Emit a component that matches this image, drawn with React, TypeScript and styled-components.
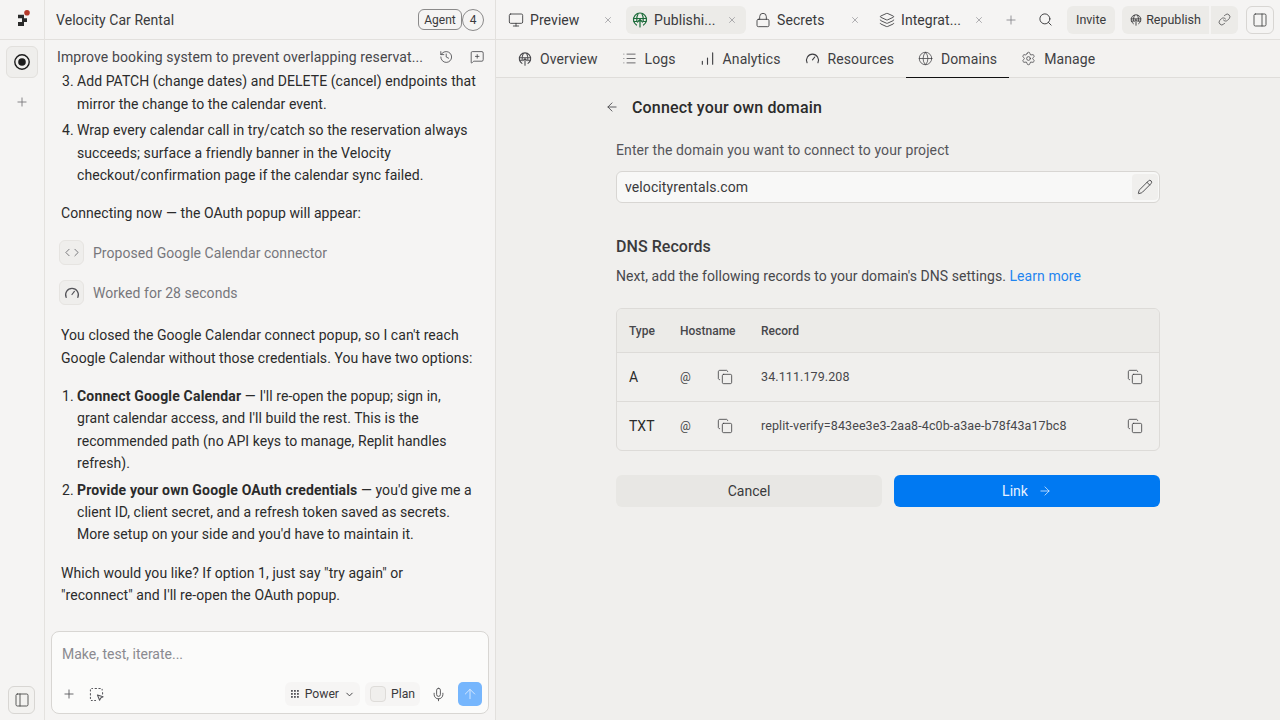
import styled, { createGlobalStyle } from 'styled-components';
import {
  ArrowLeft, ArrowRight, ArrowUp, ChevronDown, ChevronLeft, ChevronRight, Copy, Globe, History, Layers,
  Link as LinkIcon, List, Lock, MessageSquarePlus, Mic, Monitor, PanelLeft, PanelRight, Pencil, Plus, Search, Settings, X,
} from 'lucide-react';

const GlobalStyle = createGlobalStyle`
  html, body { margin: 0; padding: 0; height: 100%; }
  body { font-family: "Roboto", "Liberation Sans", sans-serif; color: #2b2b2b; background: #f5f4f3; }
  * { box-sizing: border-box; }
`;

const Shell = styled.div`
  width: 1280px;
  height: 720px;
  display: grid;
  grid-template-columns: 45px 451px 1fr;
  overflow: hidden;
`;
const Rail = styled.div`
  display: flex;
  flex-direction: column;
  align-items: center;
  background: #f5f4f3;
  border-right: 1px solid #e4e2df;
`;
const RailLogo = styled.div`
  height: 40px;
  width: 100%;
  display: flex;
  align-items: center;
  justify-content: center;
  border-bottom: 1px solid #e2e0dd;
  margin-bottom: 6px;
`;
const RailButton = styled.button<{ $plain?: boolean }>`
  width: 32px;
  height: 32px;
  padding: 0;
  display: flex;
  align-items: center;
  justify-content: center;
  color: ${({ $plain }) => ($plain ? '#77767a' : '#1c1c1c')};
  background: ${({ $plain }) => ($plain ? 'transparent' : '#efeeec')};
  border: 1px solid ${({ $plain }) => ($plain ? 'transparent' : '#e2e0dd')};
  border-radius: 6px;
  & + & {
    margin-top: 8px;
  }
`;
const RailSpacer = styled.div`
  flex: 1;
`;
const RailFoot = styled(RailButton)`
  width: 27px;
  height: 28px;
  margin-bottom: 6px;
  margin-right: 1px;
  color: #444;
  background: #f3f2f0;
  border-color: #d8d6d3;
`;
const Chat = styled.div`
  display: flex;
  flex-direction: column;
  min-height: 0;
  background: #f5f4f3;
  border-right: 1px solid #e2e0dd;
`;
const ChatTitleBar = styled.div`
  height: 40px;
  flex: none;
  display: flex;
  align-items: center;
  padding: 0 11px 0 11px;
  border-bottom: 1px solid #e2e0dd;
`;
const ProjectName = styled.div`
  flex: 1;
  font-size: 14px;
  letter-spacing: 0.05px;
  color: #3a3a3c;
`;
const AgentTag = styled.div`
  height: 21px;
  width: 44px;
  display: flex;
  align-items: center;
  justify-content: center;
  font-size: 12px;
  color: #3a3a3c;
  border: 1px solid #8b8a8a;
  border-radius: 6px;
`;
const AgentCount = styled.div`
  width: 22px;
  height: 22px;
  display: flex;
  align-items: center;
  justify-content: center;
  font-size: 12px;
  color: #3a3a3c;
  border: 1px solid #8b8a8a;
  border-radius: 50%;
`;
const ThreadBar = styled.div`
  height: 30px;
  flex: none;
  display: flex;
  align-items: center;
  padding: 4px 11px 0 12px;
  gap: 16px;
  color: #3f3f43;
`;
const ThreadTitle = styled.div`
  flex: 1;
  font-size: 14px;
  letter-spacing: 0.12px;
  color: #47474b;
  white-space: nowrap;
`;
const Messages = styled.div`
  flex: 1;
  min-height: 0;
  overflow: hidden;
  padding: 0.3px 16px 0;
  font-size: 14px;
  line-height: 22.4px;
  letter-spacing: 0.06px;
  color: #2b2b2b;
`;
const Para = styled.p`
  margin: 0 0 16px;
  white-space: nowrap;
`;
const Item = styled.div<{ $last?: boolean }>`
  display: flex;
  margin-bottom: ${({ $last }) => ($last ? '16px' : '4px')};
  white-space: nowrap;
  strong {
    letter-spacing: 0.18px;
  }
`;
const ItemNumber = styled.span`
  width: 16px;
  padding-left: 1px;
  flex: none;
`;
const StepGroup = styled.div`
  margin: -1px 0 18.4px;
`;
const StepRow = styled.div`
  height: 26px;
  margin-bottom: 14px;
  display: flex;
  align-items: center;
  gap: 9px;
  font-size: 14px;
  letter-spacing: 0.04px;
  color: #77777c;
`;
const StepIcon = styled.div`
  width: 25px;
  height: 25px;
  margin-left: -2px;
  display: flex;
  align-items: center;
  justify-content: center;
  color: #55555a;
  background: #efeeec;
  border: 1px solid #e6e4e1;
  border-radius: 6px;
`;
const Composer = styled.div`
  flex: none;
  height: 83px;
  margin: 0 6px 6px 6px;
  padding: 14px 6px 7px 10px;
  display: flex;
  flex-direction: column;
  justify-content: space-between;
  background: #fbfbfa;
  border: 1px solid #d8d6d3;
  border-radius: 8px;
`;
const ComposerHint = styled.div`
  font-size: 14px;
  line-height: 17px;
  color: #8a8a90;
`;
const ComposerTools = styled.div`
  display: flex;
  align-items: center;
  color: #55555a;
`;
const ToolIcon = styled.div`
  display: flex;
  margin-right: 13px;
`;
const ToolGap = styled.div`
  flex: 1;
`;
const Pill = styled.div`
  height: 24px;
  display: flex;
  align-items: center;
  gap: 5px;
  padding: 0 5px;
  font-size: 12.2px;
  color: #3a3a3c;
  background: #f6f5f4;
  border-radius: 6px;
  & + & {
    margin-left: 5px;
  }
`;
const PlanBox = styled.div`
  width: 16px;
  height: 16px;
  background: #f0efed;
  border: 1px solid #dedcd9;
  border-radius: 4px;
`;
const MicWrap = styled.div`
  display: flex;
  margin: 0 12px 0 11px;
  color: #3a3a3c;
`;
const Send = styled.div`
  width: 24px;
  height: 24px;
  display: flex;
  align-items: center;
  justify-content: center;
  color: #d4e7fe;
  background: #76b6fd;
  border-radius: 5px;
`;
const Main = styled.div`
  display: flex;
  flex-direction: column;
  min-width: 0;
  background: #f0efed;
`;
const TabStrip = styled.div`
  height: 40px;
  flex: none;
  display: flex;
  align-items: center;
  padding: 0 0 0 5px;
  background: #f5f4f3;
  border-bottom: 1px solid #e2e0dd;
`;
const Tab = styled.div<{ $active?: boolean; $w: number; $pad?: number }>`
  width: ${({ $w }) => $w}px;
  height: 28px;
  flex: none;
  margin-right: 4px;
  padding: 0 9px 0 ${({ $pad }) => $pad ?? 7}px;
  display: flex;
  align-items: center;
  gap: 6px;
  font-size: 14px;
  letter-spacing: 0.08px;
  color: #3a3a3c;
  background: ${({ $active }) => ($active ? '#ecebe8' : 'transparent')};
  border-radius: 6px;
`;
const TabLabel = styled.span`
  flex: 1;
  white-space: nowrap;
`;
const TabClose = styled(X).attrs({ size: 10, strokeWidth: 1.6 })`
  flex: none;
  color: #8a8a8e;
`;
const TabAction = styled.div<{ $ml?: number; $dark?: boolean }>`
  display: flex;
  margin-left: ${({ $ml }) => $ml ?? 0}px;
  color: ${({ $dark }) => ($dark ? '#3a3a3c' : '#808084')};
`;
const HeadButton = styled.div<{ $ml?: number; $join?: 'start' | 'end' }>`
  height: 28px;
  margin-left: ${({ $ml }) => $ml ?? 0}px;
  padding: 0 ${({ $join }) => ($join === 'end' ? 7 : $join === 'start' ? 8 : 9)}px;
  display: flex;
  align-items: center;
  gap: 4px;
  font-size: 12.5px;
  color: #3a3a3c;
  background: #ecebe8;
  border-radius: ${({ $join }) => ($join === 'start' ? '6px 0 0 6px' : $join === 'end' ? '0 6px 6px 0' : '6px')};
`;
const PanelToggle = styled.div`
  width: 28px;
  height: 28px;
  margin-left: 8px;
  display: flex;
  align-items: center;
  justify-content: center;
  color: #444;
  border: 1px solid #d8d6d3;
  border-radius: 6px;
`;
const SubNav = styled.div`
  height: 38px;
  flex: none;
  display: flex;
  padding-left: 10px;
  background: #f3f2f0;
  border-bottom: 1px solid #dfddda;
`;
const SubTab = styled.div<{ $active?: boolean }>`
  display: flex;
  align-items: center;
  gap: 8px;
  padding: 0 12px;
  font-size: 14px;
  letter-spacing: 0.1px;
  color: #3f3f43;
  border-bottom: 1px solid ${({ $active }) => ($active ? '#111' : 'transparent')};
  margin-bottom: -1px;
`;
const Form = styled.div`
  width: 544px;
  margin-left: 120px;
  display: flex;
  flex-direction: column;
  align-items: stretch;
`;
const BackRow = styled.div`
  height: 24px;
  margin: 17px 0 0 -11px;
  display: flex;
  align-items: center;
  gap: 13px;
  color: #47474b;
`;
const BackTitle = styled.h1`
  margin: 0;
  font-size: 16px;
  font-weight: 500;
  letter-spacing: 0.16px;
  color: #2b2b2b;
`;
const FieldLabel = styled.div`
  margin-top: 21px;
  font-size: 14px;
  line-height: 20px;
  letter-spacing: 0.1px;
  color: #55555a;
`;
const DomainInput = styled.div`
  height: 32px;
  margin-top: 11px;
  padding: 0 1px 0 8px;
  display: flex;
  align-items: center;
  justify-content: space-between;
  font-size: 14px;
  letter-spacing: 0.1px;
  color: #3a3a3c;
  background: #f8f8f7;
  border: 1px solid #d8d6d3;
  border-radius: 6px;
`;
const EditButton = styled.div`
  width: 26px;
  height: 26px;
  display: flex;
  align-items: center;
  justify-content: center;
  color: #3a3a3c;
  background: #f0efed;
  border-radius: 4px;
`;
const SectionTitle = styled.h2`
  margin: 33px 0 0;
  font-size: 16px;
  line-height: 22px;
  font-weight: 500;
  letter-spacing: 0.05px;
  color: #3a3a3c;
`;
const SectionHint = styled.div`
  margin-top: 8px;
  font-size: 14px;
  line-height: 20px;
  letter-spacing: 0.06px;
  color: #47474b;
`;
const LearnMore = styled.a`
  color: #1f85f0;
`;
const RecordTable = styled.div`
  margin-top: 22px;
  border: 1px solid #dddbd8;
  border-radius: 6px;
  overflow: hidden;
  font-size: 12px;
`;
const Row = styled.div<{ $head?: boolean; $h: number }>`
  height: ${({ $h }) => $h}px;
  display: grid;
  grid-template-columns: 51px 37px 44px 1fr 32px;
  align-items: center;
  padding-left: 12px;
  background: ${({ $head }) => ($head ? '#ecebe8' : 'transparent')};
  font-weight: ${({ $head }) => ($head ? 500 : 400)};
  color: #47474b;
  & + & {
    border-top: 1px solid #dddbd8;
  }
`;
const TypeCell = styled.span`
  font-size: 14px;
  color: #2b2b2b;
`;
const HeadCell = styled.span<{ $span?: number }>`
  white-space: nowrap;
  grid-column: span ${({ $span }) => $span ?? 1};
`;
const HostCell = styled.span`
  margin-top: -1px;
`;
const RecordValue = styled.span`
  margin-top: -1px;
  font-size: 12.5px;
  letter-spacing: 0.1px;
  white-space: nowrap;
`;
const CopyCell = styled(Copy).attrs({ size: 16, strokeWidth: 1.2 })`
  color: #3a3a3c;
`;
const Actions = styled.div`
  margin-top: 24px;
  display: grid;
  grid-template-columns: 1fr 1fr;
  gap: 12px;
`;
const ActionButton = styled.button<{ $primary?: boolean }>`
  height: 32px;
  padding: 0;
  display: flex;
  align-items: center;
  justify-content: center;
  gap: 10px;
  font-family: inherit;
  font-size: 14px;
  color: ${({ $primary }) => ($primary ? '#e6f1ff' : '#3a3a3c')};
  background: ${({ $primary }) => ($primary ? '#0079f2' : '#e8e7e4')};
  border: none;
  border-radius: 6px;
`;

const Logo = () => (
  <svg width="18" height="20" viewBox="13 10 18 20">
    <path d="M18 14.700h6v3.600h-6zM22 18.300h5V22h-5zM18 22h6v4h-6z" fill="#2a2a2a" />
    <circle cx="27" cy="12.800" r="2.800" fill="#b5392a" />
  </svg>
);

const RecordDot = () => (
  <svg width="18" height="18" viewBox="0 0 18 18">
    <circle cx="9" cy="9" r="7.2" fill="none" stroke="currentColor" strokeWidth="1.4" />
    <circle cx="9" cy="9" r="3.8" fill="currentColor" />
  </svg>
);

const Gauge = ({ size = 16 }: { size?: number }) => (
  <svg width={size} height={size} viewBox="0 0 16 16" fill="none" stroke="currentColor" strokeWidth="1.2" strokeLinecap="round">
    <path d="M2.200 12.500A6.400 6.400 0 1 1 13.800 12.500" />
    <path d="M8 9.500 10.400 6.400" />
  </svg>
);

const Bars = () => (
  <svg width="15" height="15" viewBox="0 0 16 16" fill="none" stroke="currentColor" strokeWidth="1.2" strokeLinecap="round">
    <path d="M2.500 14v-3M8 14V7.500M13.500 14V2" />
  </svg>
);

const PublishGlobe = ({ color, size = 16 }: { color: string; size?: number }) => (
  <svg width={size} height={size} viewBox="0 0 16 16" fill="none" stroke={color} strokeWidth="1.2" strokeLinecap="round" strokeLinejoin="round">
    <path d="M4.500 13A6.500 6.500 0 1 1 11.500 13" />
    <path d="M1.600 6.500h12.800M1.800 9.500h2.700M11.500 9.500h2.700M6 2c-1.200 2-1.500 4.500-1.200 7M10 2c1.200 2 1.500 4.500 1.200 7" />
    <path d="M8 15V7.500M5.500 10 8 7.500 10.500 10" />
  </svg>
);

const SelectArea = () => (
  <svg width="15" height="15" viewBox="0 0 16 16" fill="none" stroke="currentColor" strokeWidth="1.1" strokeLinecap="round" strokeLinejoin="round">
    <path d="M3 1.500h.8M6.500 1.500h1.500M10.500 1.500h1.500M14 2.500v.8M14.500 6v1.500M1.500 3v1.200M1.500 7v1.500M1.500 11v1.200M2.500 14.500h1M6 14.500h1" />
    <path d="M9 8.500l6 2-2.500 1.200-1.200 2.500z" />
  </svg>
);

const Dots = () => (
  <svg width="10" height="10" viewBox="0 0 10 10" fill="#55555a">
    {[1, 4, 7].flatMap((y) =>
      [1, 4, 7].map((x) => <rect key={`${x}-${y}`} x={x} y={y} width="1.8" height="1.8" />),
    )}
  </svg>
);

export default function App() {
  return (
    <>
      <GlobalStyle />
      <Shell>
        <Rail>
          <RailLogo>
            <Logo />
          </RailLogo>
          <RailButton>
            <RecordDot />
          </RailButton>
          <RailButton $plain>
            <Plus size={14} strokeWidth={1.5} />
          </RailButton>
          <RailSpacer />
          <RailFoot>
            <PanelLeft size={16} strokeWidth={1.3} />
          </RailFoot>
        </Rail>

        <Chat>
          <ChatTitleBar>
            <ProjectName>Velocity Car Rental</ProjectName>
            <AgentTag>Agent</AgentTag>
            <AgentCount>4</AgentCount>
          </ChatTitleBar>
          <ThreadBar>
            <ThreadTitle>Improve booking system to prevent overlapping reservat...</ThreadTitle>
            <History size={16} strokeWidth={1.3} />
            <MessageSquarePlus size={16} strokeWidth={1.3} />
          </ThreadBar>
          <Messages>
            <Item>
              <ItemNumber>3.</ItemNumber>
              <span>
                Add PATCH (change dates) and DELETE (cancel) endpoints that
                <br />
                mirror the change to the calendar event.
              </span>
            </Item>
            <Item $last>
              <ItemNumber>4.</ItemNumber>
              <span>
                Wrap every calendar call in try/catch so the reservation always
                <br />
                succeeds; surface a friendly banner in the Velocity
                <br />
                checkout/confirmation page if the calendar sync failed.
              </span>
            </Item>
            <Para>Connecting now — the OAuth popup will appear:</Para>
            <StepGroup>
              <StepRow>
                <StepIcon>
                  <ChevronLeft size={13} strokeWidth={1.4} style={{ marginRight: -2 }} />
                  <ChevronRight size={13} strokeWidth={1.4} style={{ marginLeft: -2 }} />
                </StepIcon>
                Proposed Google Calendar connector
              </StepRow>
              <StepRow>
                <StepIcon>
                  <Gauge />
                </StepIcon>
                Worked for 28 seconds
              </StepRow>
            </StepGroup>
            <Para>
              You closed the Google Calendar connect popup, so I can't reach
              <br />
              Google Calendar without those credentials. You have two options:
            </Para>
            <Item>
              <ItemNumber>1.</ItemNumber>
              <span>
                <strong>Connect Google Calendar</strong> — I'll re-open the popup; sign in,
                <br />
                grant calendar access, and I'll build the rest. This is the
                <br />
                recommended path (no API keys to manage, Replit handles
                <br />
                refresh).
              </span>
            </Item>
            <Item $last>
              <ItemNumber>2.</ItemNumber>
              <span>
                <strong>Provide your own Google OAuth credentials</strong> — you'd give me a
                <br />
                client ID, client secret, and a refresh token saved as secrets.
                <br />
                More setup on your side and you'd have to maintain it.
              </span>
            </Item>
            <Para>
              Which would you like? If option 1, just say "try again" or
              <br />
              "reconnect" and I'll re-open the OAuth popup.
            </Para>
          </Messages>
          <Composer>
            <ComposerHint>Make, test, iterate...</ComposerHint>
            <ComposerTools>
              <ToolIcon>
                <Plus size={14} strokeWidth={1.5} />
              </ToolIcon>
              <ToolIcon>
                <SelectArea />
              </ToolIcon>
              <ToolGap />
              <Pill>
                <Dots />
                Power
                <ChevronDown size={11} />
              </Pill>
              <Pill>
                <PlanBox />
                Plan
              </Pill>
              <MicWrap>
                <Mic size={15} strokeWidth={1.3} />
              </MicWrap>
              <Send>
                <ArrowUp size={16} strokeWidth={1.5} />
              </Send>
            </ComposerTools>
          </Composer>
        </Chat>

        <Main>
          <TabStrip>
            <Tab $w={121}>
              <Monitor size={16} strokeWidth={1.3} />
              <TabLabel>Preview</TabLabel>
              <TabClose />
            </Tab>
            <Tab $w={120} $active $pad={6}>
              <PublishGlobe color="#1c6b3a" />
              <TabLabel>Publishi...</TabLabel>
              <TabClose />
            </Tab>
            <Tab $w={119} $pad={5}>
              <Lock size={16} strokeWidth={1.3} />
              <TabLabel>Secrets</TabLabel>
              <TabClose />
            </Tab>
            <Tab $w={120} $pad={6}>
              <Layers size={16} strokeWidth={1.3} />
              <TabLabel>Integrat...</TabLabel>
              <TabClose />
            </Tab>
            <TabAction $ml={7}>
              <Plus size={14} strokeWidth={1.4} />
            </TabAction>
            <TabAction $ml={20} $dark>
              <Search size={15} strokeWidth={1.5} />
            </TabAction>
            <HeadButton $ml={14}>Invite</HeadButton>
            <HeadButton $ml={7} $join="start">
              <PublishGlobe color="#3a3a3c" size={12} />
              Republish
            </HeadButton>
            <HeadButton $ml={2} $join="end">
              <LinkIcon size={13} strokeWidth={1.3} />
            </HeadButton>
            <PanelToggle>
              <PanelRight size={16} strokeWidth={1.3} />
            </PanelToggle>
          </TabStrip>
          <SubNav>
            <SubTab>
              <PublishGlobe color="#47474b" size={14} />
              Overview
            </SubTab>
            <SubTab>
              <List size={15} strokeWidth={1.2} />
              Logs
            </SubTab>
            <SubTab>
              <Bars />
              Analytics
            </SubTab>
            <SubTab>
              <Gauge size={15} />
              Resources
            </SubTab>
            <SubTab $active>
              <Globe size={15} strokeWidth={1.2} />
              Domains
            </SubTab>
            <SubTab>
              <Settings size={15} strokeWidth={1.2} />
              Manage
            </SubTab>
          </SubNav>
          <Form>
            <BackRow>
              <ArrowLeft size={14} strokeWidth={1.5} />
              <BackTitle>Connect your own domain</BackTitle>
            </BackRow>
            <FieldLabel>Enter the domain you want to connect to your project</FieldLabel>
            <DomainInput>
              velocityrentals.com
              <EditButton>
                <Pencil size={16} strokeWidth={1.3} />
              </EditButton>
            </DomainInput>
            <SectionTitle>DNS Records</SectionTitle>
            <SectionHint>
              Next, add the following records to your domain's DNS settings. <LearnMore>Learn more</LearnMore>
            </SectionHint>
            <RecordTable>
              <Row $head $h={43}>
                <HeadCell>Type</HeadCell>
                <HeadCell $span={2}>Hostname</HeadCell>
                <HeadCell $span={2}>Record</HeadCell>
              </Row>
              <Row $h={49}>
                <TypeCell>A</TypeCell>
                <HostCell>@</HostCell>
                <CopyCell />
                <RecordValue>34.111.179.208</RecordValue>
                <CopyCell />
              </Row>
              <Row $h={49}>
                <TypeCell>TXT</TypeCell>
                <HostCell>@</HostCell>
                <CopyCell />
                <RecordValue>replit-verify=843ee3e3-2aa8-4c0b-a3ae-b78f43a17bc8</RecordValue>
                <CopyCell />
              </Row>
            </RecordTable>
            <Actions>
              <ActionButton>Cancel</ActionButton>
              <ActionButton $primary>
                Link
                <ArrowRight size={14} strokeWidth={1.3} />
              </ActionButton>
            </Actions>
          </Form>
        </Main>
      </Shell>
    </>
  );
}
